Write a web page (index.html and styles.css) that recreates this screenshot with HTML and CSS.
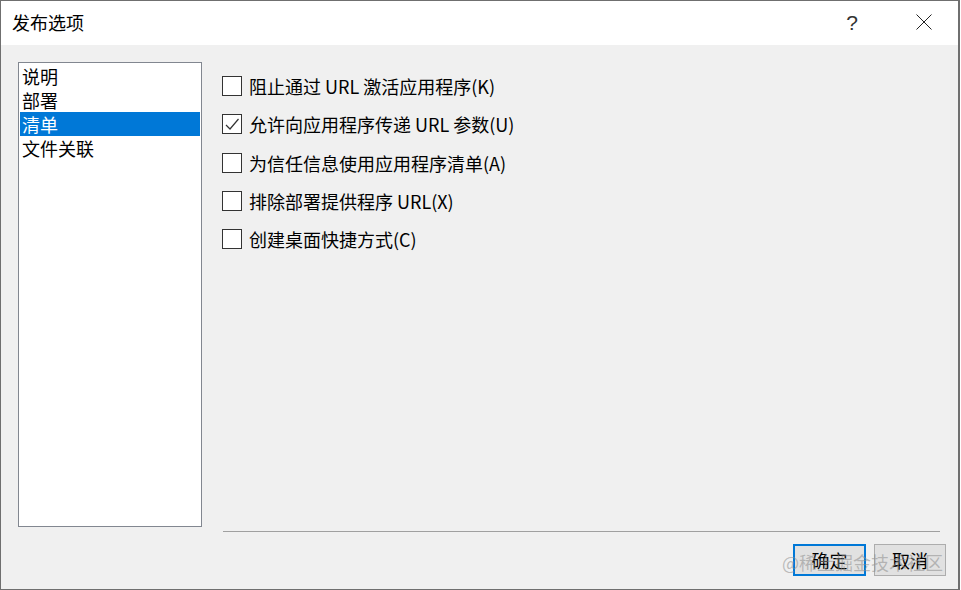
FILE: index.html
```html
<!DOCTYPE html>
<html lang="zh-CN">
<head>
<meta charset="utf-8">
<title>发布选项</title>
<link rel="stylesheet" href="styles.css">
</head>
<body>
<div class="window">
  <div class="titlebar">
    <div class="title">发布选项</div>
    <div class="controls">
      <span class="help">?</span>
      <span class="close">
        <svg width="16" height="16" viewBox="0 0 16 16"><path d="M0.5 0.5 L15.5 15.5 M15.5 0.5 L0.5 15.5" stroke="#222" stroke-width="1" fill="none"/></svg>
      </span>
    </div>
  </div>
  <div class="main">
    <div class="list">
      <div class="item">说明</div>
      <div class="item">部署</div>
      <div class="item selected">清单</div>
      <div class="item">文件关联</div>
    </div>
    <div class="options">
      <div class="opt"><span class="box"></span><span class="label">阻止通过 URL 激活应用程序(K)</span></div>
      <div class="opt"><span class="box"><svg width="18" height="18" viewBox="0 0 18 18"><path d="M3 10 L7 14 L15.5 4" stroke="#333" stroke-width="1.2" fill="none"/></svg></span><span class="label">允许向应用程序传递 URL 参数(U)</span></div>
      <div class="opt"><span class="box"></span><span class="label">为信任信息使用应用程序清单(A)</span></div>
      <div class="opt"><span class="box"></span><span class="label">排除部署提供程序 URL(X)</span></div>
      <div class="opt"><span class="box"></span><span class="label">创建桌面快捷方式(C)</span></div>
    </div>
  </div>
  <div class="sep"></div>
  <div class="buttons">
    <div class="btn default">确定</div>
    <div class="btn">取消</div>
  </div>
  <div class="watermark">@稀土掘金技术社区</div>
</div>
</body>
</html>
```
FILE: styles.css
```css
html, body {
  margin: 0;
  padding: 0;
  background: #ffffff;
}
body {
  font-family: "Noto Sans CJK SC", "Noto Sans", sans-serif;
  font-size: 18px;
  color: #000;
}
.window {
  position: relative;
  width: 960px;
  height: 590px;
  box-sizing: border-box;
  border: 1px solid #6f6f6f;
  border-right-width: 2px;
  background: #f0f0f0;
  display: flex;
  flex-direction: column;
  overflow: hidden;
}
.titlebar {
  height: 44px;
  flex: none;
  background: #ffffff;
  display: flex;
  align-items: center;
  justify-content: space-between;
}
.title {
  padding-left: 11px;
  font-size: 18px;
  line-height: 24px;
  margin-top: -2px;
}
.controls {
  display: flex;
  align-items: center;
  height: 100%;
}
.help {
  width: 24px;
  text-align: center;
  font-family: "Liberation Sans", sans-serif;
  font-size: 21px;
  line-height: 24px;
  color: #333;
  margin-right: 50px;
  margin-top: -1px;
}
.close {
  display: flex;
  align-items: center;
  justify-content: center;
  width: 20px;
  margin-right: 24px;
  margin-top: -2px;
}
.main {
  display: flex;
  gap: 20px;
  padding: 17px 0 0 17px;
  flex: none;
}
.list {
  width: 184px;
  height: 465px;
  box-sizing: border-box;
  border: 1px solid #828790;
  background: #ffffff;
  padding: 1px 1px;
}
.item {
  height: 24px;
  line-height: 24px;
  padding-left: 2px;
  white-space: nowrap;
}
.selected {
  background: #0078d7;
  color: #ffffff;
}
.options {
  display: flex;
  flex-direction: column;
  gap: 18.3px;
  padding-top: 14px;
}
.opt {
  display: flex;
  align-items: center;
  height: 20px;
}
.box {
  width: 20px;
  height: 20px;
  box-sizing: border-box;
  border: 1px solid #333333;
  background: #ffffff;
  display: flex;
  align-items: center;
  justify-content: center;
  flex: none;
}
.label {
  margin-left: 7px;
  line-height: 24px;
  white-space: nowrap;
}
.sep {
  height: 1px;
  background: #a0a0a0;
  margin: 4px 18px 0 222px;
  flex: none;
}
.buttons {
  display: flex;
  justify-content: flex-end;
  gap: 8px;
  margin-top: 12px;
  padding-right: 12px;
}
.btn {
  width: 72px;
  height: 32px;
  box-sizing: border-box;
  border: 1px solid #adadad;
  background: #e1e1e1;
  display: flex;
  align-items: center;
  justify-content: center;
  line-height: 24px;
}
.btn.default {
  width: 73px;
  border: 2px solid #0078d7;
}
.watermark {
  position: absolute;
  left: 781px;
  top: 549px;
  font-size: 18px;
  line-height: 24px;
  color: rgba(140, 140, 140, 0.55);
  white-space: nowrap;
  pointer-events: none;
}
```
